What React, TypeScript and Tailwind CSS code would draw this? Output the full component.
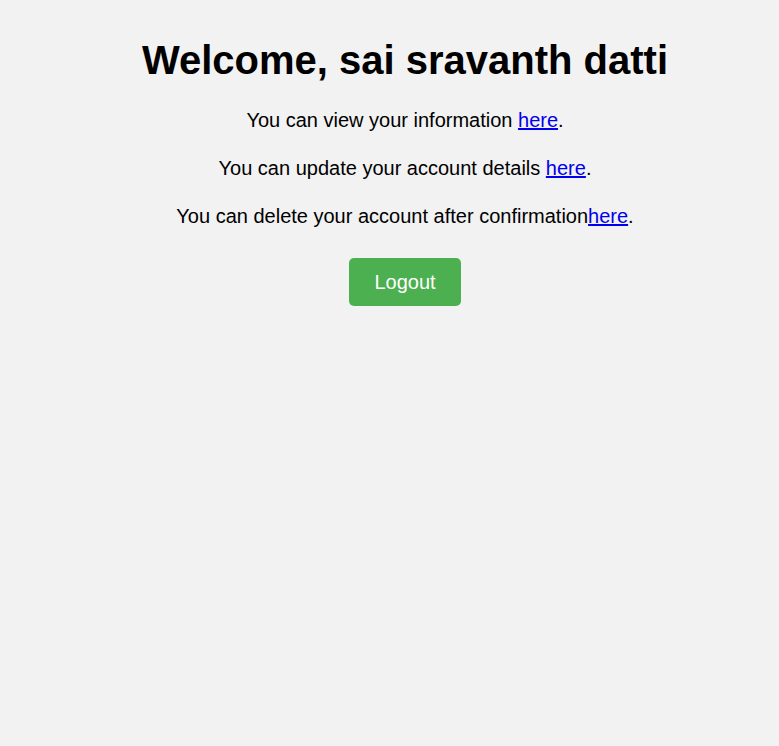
export default function App() {
  return (
    <div className="min-h-screen bg-[#f2f2f2] font-['Liberation_Sans',Arial,sans-serif] text-black">
      <div className="pl-[31px] pt-[37px] flex flex-col items-center text-center">
        <h1 className="text-[40px] font-bold leading-[46px] mb-[13px]">Welcome, sai sravanth datti</h1>
        <p className="text-[20px] leading-[28px] my-[10px]">
          You can view your information{' '}
          <a href="#" className="text-[#0000ee] underline">here</a>.
        </p>
        <p className="text-[20px] leading-[28px] my-[10px]">
          You can update your account details{' '}
          <a href="#" className="text-[#0000ee] underline">here</a>.
        </p>
        <p className="text-[20px] leading-[28px] my-[10px]">
          You can delete your account after confirmation
          <a href="#" className="text-[#0000ee] underline">here</a>.
        </p>
        <button className="mt-[18px] w-[112px] h-[48px] bg-[#4caf50] text-white text-[20px] rounded-[5px]">
          Logout
        </button>
      </div>
    </div>
  )
}
